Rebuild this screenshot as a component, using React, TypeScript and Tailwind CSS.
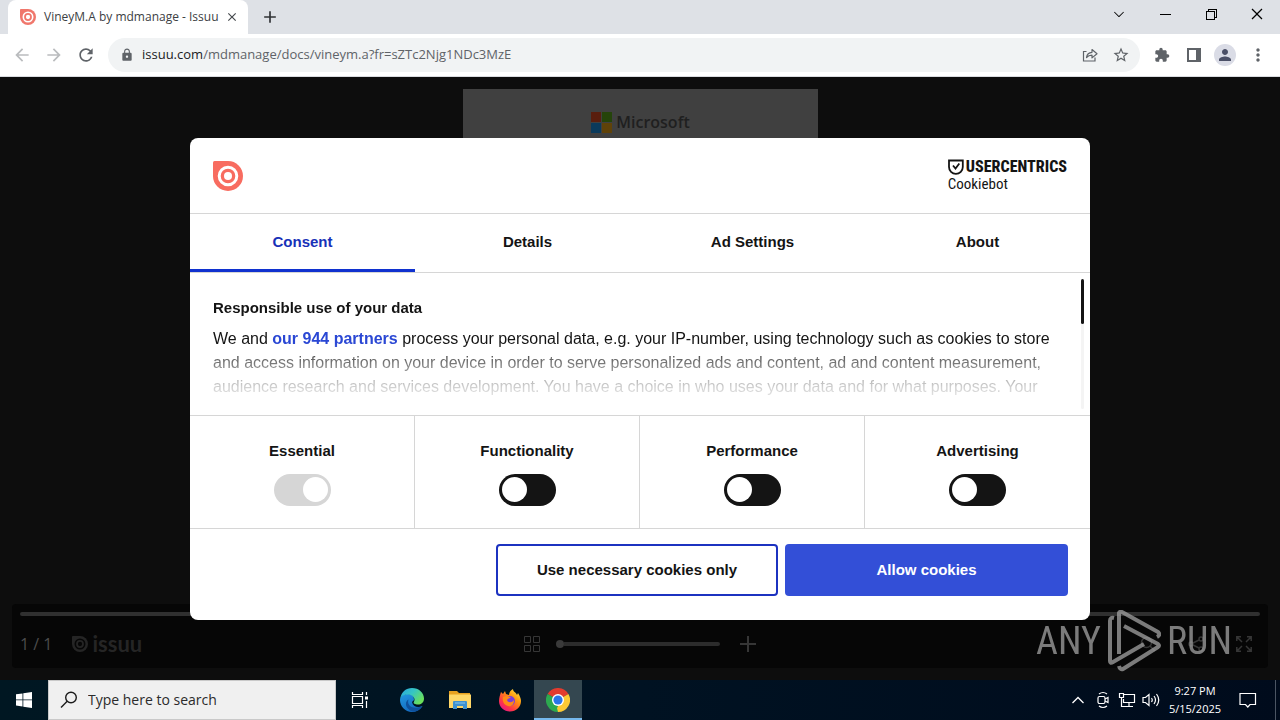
import { useState } from 'react'
import {
  MdAdd,
  MdArrowBack,
  MdArrowForward,
  MdClose,
  MdExtension,
  MdLock,
  MdMoreVert,
  MdPerson,
  MdRefresh,
  MdStarBorder
} from 'react-icons/md'
import { VscChevronDown, VscChromeClose, VscChromeMinimize, VscChromeRestore } from 'react-icons/vsc'

const tabs = ['Consent', 'Details', 'Ad Settings', 'About']

const categories = [
  { id: 'essential', label: 'Essential', locked: true },
  { id: 'functionality', label: 'Functionality', locked: false },
  { id: 'performance', label: 'Performance', locked: false },
  { id: 'advertising', label: 'Advertising', locked: false }
]

function IssuuMark({ className }: { className: string }) {
  return (
    <svg viewBox="0 0 30 30" className={className} fill="none">
      <path d="M1.500 0H15a15 15 0 1 1-15 15V1.500Q0 0 1.500 0Z" fill="currentColor" />
      <circle cx="15" cy="15" r="8.800" className="stroke-(--ring)" strokeWidth="3" />
      <circle cx="15" cy="15" r="4" className="fill-(--ring)" />
    </svg>
  )
}

function ShareIcon() {
  return (
    <svg viewBox="0 0 16 16" className="h-4 w-4" fill="none" stroke="currentColor" strokeWidth="1.200">
      <path d="M4.500 4.500H1.500V14h11.500V10.500" />
      <path d="M4.500 10.500C5 7 7 5.500 10 5.300V2.500l5 4.200-5 4.200V8.200C7.500 8.200 6 8.800 4.500 10.500Z" strokeLinejoin="round" />
    </svg>
  )
}

function TitleBar() {
  return (
    <header className="flex h-[34px] items-stretch bg-[#dee1e6] pl-2">
      <div className="flex w-60 items-center rounded-t-lg bg-white pl-3 pr-2">
        <IssuuMark className="h-4 w-4 text-[#f0776c] [--ring:#fff]" />
        <span className="ml-2 flex-1 whitespace-nowrap text-xs text-[#3c4043]">VineyM.A by mdmanage - Issuu</span>
        <button aria-label="Close tab" className="flex h-4 w-4 items-center justify-center text-[#45494d]">
          <MdClose className="h-[14px] w-[14px]" />
        </button>
      </div>
      <button aria-label="New tab" className="ml-3 text-[#303336]">
        <MdAdd className="h-5 w-5" />
      </button>
      <div className="ml-auto flex pb-[6px] text-black">
        <button aria-label="Search tabs" className="flex w-[46px] items-center justify-center">
          <VscChevronDown className="h-4 w-4" />
        </button>
        <button aria-label="Minimize" className="flex w-[46px] items-center justify-center">
          <VscChromeMinimize className="h-4 w-4" />
        </button>
        <button aria-label="Restore" className="flex w-[46px] items-center justify-center">
          <VscChromeRestore className="h-4 w-4" />
        </button>
        <button aria-label="Close" className="flex w-[46px] items-center justify-center">
          <VscChromeClose className="h-4 w-4" />
        </button>
      </div>
    </header>
  )
}

function Toolbar() {
  return (
    <nav className="flex h-[43px] items-center border-b border-[#dadce0] bg-white pl-3 pr-3 text-[#5f6368]">
      <div className="flex gap-3">
        <button aria-label="Back" className="text-[#babcbe]">
          <MdArrowBack className="h-5 w-5" />
        </button>
        <button aria-label="Forward" className="text-[#babcbe]">
          <MdArrowForward className="h-5 w-5" />
        </button>
        <button aria-label="Reload">
          <MdRefresh className="h-5 w-5" />
        </button>
      </div>
      <div className="ml-3 flex h-[34px] flex-1 items-center rounded-full bg-[#f1f3f4] pl-3 pr-[10px]">
        <MdLock className="mr-2 h-[14px] w-[14px]" />
        <label htmlFor="url" className="text-[13px] text-[#202124]">issuu.com</label>
        <input
          id="url"
          defaultValue="/mdmanage/docs/vineym.a?fr=sZTc2Njg1NDc3MzE"
          className="min-w-0 flex-1 bg-transparent text-[13px] outline-none"
        />
        <button aria-label="Share this page">
          <ShareIcon />
        </button>
        <button aria-label="Bookmark this tab" className="ml-[14px]">
          <MdStarBorder className="h-[18px] w-[18px]" />
        </button>
      </div>
      <div className="ml-[14px] flex items-center">
        <button aria-label="Extensions">
          <MdExtension className="h-4 w-4" />
        </button>
        <button aria-label="Side panel" className="ml-4">
          <svg viewBox="0 0 16 16" className="h-4 w-4" fill="currentColor">
            <path d="M1 1h14v14H1zM3 3v10h7V3z" fillRule="evenodd" />
          </svg>
        </button>
        <button
          aria-label="Profile"
          className="ml-3 flex h-[22px] w-[22px] items-center justify-center rounded-full bg-[#dadce6] text-[#4b5067]"
        >
          <MdPerson className="h-[18px] w-[18px]" />
        </button>
        <button aria-label="More" className="ml-3">
          <MdMoreVert className="h-5 w-5" />
        </button>
      </div>
    </nav>
  )
}

function Viewer() {
  return (
    <div className="flex flex-1 flex-col px-3 pb-3 pt-3">
      <div className="mx-auto flex w-[355px] flex-1 flex-col items-center bg-[#404040] pt-[21px]">
        <div className="flex items-center gap-1 text-[#1f1f1f]">
          <svg viewBox="0 0 22 22" className="h-[22px] w-[22px]">
            <path d="M1 1h10v10H1z" fill="#591e0e" />
            <path d="M12 1h10v10H12z" fill="#25440a" />
            <path d="M1 12h10v10H1z" fill="#0b3a5b" />
            <path d="M12 12h10v10H12z" fill="#5f4209" />
          </svg>
          <span className="font-['Open_Sans',sans-serif] text-base font-semibold">Microsoft</span>
        </div>
      </div>
      <div className="flex h-16 flex-col rounded bg-[#060606] px-2 pt-2">
        <div className="h-1 rounded-full bg-[#303030]" />
        <div className="grid flex-1 grid-cols-3 items-center pt-1 text-[#363636]">
          <div className="flex items-center gap-5">
            <span className="text-base text-[#4c4c4c]">1 / 1</span>
            <div className="flex items-center gap-1 text-[#252525]">
              <IssuuMark className="h-4 w-4 [--ring:#060606]" />
              <span className="font-[Lato,sans-serif] text-[22px]/5 font-bold">issuu</span>
            </div>
          </div>
          <div className="flex items-center justify-center gap-4">
            <svg viewBox="0 0 16 16" className="h-4 w-4" fill="none" stroke="currentColor">
              <path d="M.5.5h6v6h-6zM9.500.5h6v6h-6zM.5 9.500h6v6h-6zM9.500 9.500h6v6h-6z" />
            </svg>
            <div className="mr-1 flex w-[164px] items-center">
              <div className="h-2 w-2 rounded-full bg-[#3a3a3a]" />
              <div className="h-1 flex-1 rounded-r-full bg-[#2c2c2c]" />
            </div>
            <svg viewBox="0 0 16 16" className="h-4 w-4" stroke="currentColor" strokeWidth="2">
              <path d="M8 0v16M0 8h16" />
            </svg>
          </div>
          <div className="flex items-center justify-end gap-8 pr-2">
            <svg viewBox="0 0 16 16" className="h-4 w-4" fill="none" stroke="currentColor" strokeWidth="1.500">
              <circle cx="6.500" cy="6.500" r="5" />
              <path d="M10 10l5 5" />
            </svg>
            <svg viewBox="0 0 16 16" className="h-4 w-4" fill="none" stroke="currentColor" strokeWidth="1.500">
              <circle cx="3" cy="8" r="2" />
              <circle cx="13" cy="3" r="2" />
              <circle cx="13" cy="13" r="2" />
              <path d="M5 7l6-3M5 9l6 3" />
            </svg>
            <svg viewBox="0 0 16 16" className="h-4 w-4" fill="none" stroke="currentColor" strokeWidth="1.500">
              <path d="M.8 5V.8H5M1 1l5 5M11 .8h4.200V5M15 1l-5 5M.8 11v4.200H5M1 15l5-5M11 15.200h4.200V11M15 15l-5-5" />
            </svg>
          </div>
        </div>
      </div>
    </div>
  )
}

function CookieDialog() {
  const [activeTab, setActiveTab] = useState('Consent')

  return (
    <div
      role="dialog"
      aria-label="Cookie consent"
      className="w-full max-w-[900px] overflow-hidden rounded-lg bg-white font-['Liberation_Sans',Arial,sans-serif] text-[15px] text-[#141414]"
    >
      <div className="flex h-[76px] items-center justify-between border-b border-[#d6d6d6] px-[23px] pt-[2px]">
        <IssuuMark className="h-[30px] w-[30px] text-[#f86c60] [--ring:#fff]" />
        <div className="font-['Roboto_Condensed','Liberation_Sans_Narrow',sans-serif]">
          <div className="flex items-center gap-[2px]">
            <svg viewBox="0 0 16 16" className="h-4 w-4" fill="none" stroke="currentColor" strokeWidth="1.800">
              <path d="M1 1.500h13.800V8a6.900 6.900 0 0 1-13.800 0Z" />
              <path d="M5 6.500l2.500 3 3.800-5" />
            </svg>
            <span className="text-base/4 font-extrabold">USERCENTRICS</span>
          </div>
          <div className="text-[15px]/[18px]">Cookiebot</div>
        </div>
      </div>

      <div role="tablist" className="grid h-[59px] grid-cols-4 border-b border-[#d6d6d6]">
        {tabs.map((tab) => (
          <button
            key={tab}
            role="tab"
            aria-selected={tab === activeTab}
            onClick={() => setActiveTab(tab)}
            className={`border-b-[3px] pt-[2px] font-bold ${
              tab === activeTab ? 'border-[#1032cf] text-[#1831b8]' : 'border-transparent'
            }`}
          >
            {tab}
          </button>
        ))}
      </div>

      <div className="flex h-[143px] justify-between overflow-hidden border-b border-[#d6d6d6] pl-[23px] pr-[6px] pt-[6px]">
        <div className="h-[136px] overflow-hidden pt-[17px] [mask-image:linear-gradient(to_bottom,#000_64px,#0008_86px,#0003_108px,transparent_134px)]">
          <h2 className="text-[15px]/6 font-bold">Responsible use of your data</h2>
          <p className="mt-[7px] whitespace-nowrap text-base/6">
            We and{' '}
            <a href="#partners" className="font-bold text-[#2a47d4]">our 944 partners</a>
            {' '}process your personal data, e.g. your IP-number, using technology such as cookies to store
            <br />
            and access information on your device in order to serve personalized ads and content, ad and content measurement,
            <br />
            audience research and services development. You have a choice in who uses your data and for what purposes. Your
          </p>
        </div>
        <div className="h-[130px] w-[3px] rounded-full bg-[#f4f4f4]">
          <div className="h-[45px] rounded-full bg-[#141414]" />
        </div>
      </div>

      <div className="grid h-[113px] grid-cols-4 divide-x divide-[#d6d6d6] border-b border-[#d6d6d6]">
        {categories.map(({ id, label, locked }) => (
          <div key={id} className="flex flex-col items-center gap-3 pt-6">
            <label htmlFor={id} className="leading-[22px] font-bold">{label}</label>
            <input
              id={id}
              type="checkbox"
              defaultChecked={locked}
              disabled={locked}
              className="flex h-8 w-[57px] appearance-none items-center rounded-full bg-[#141414] px-[3px] before:h-[25px] before:w-[25px] before:rounded-full before:bg-white checked:justify-end checked:bg-[#1032cf] disabled:bg-[#d6d6d6]"
            />
          </div>
        ))}
      </div>

      <div className="flex h-[91px] justify-end gap-[7px] px-[22px] pt-[15px]">
        <button className="h-[52px] w-[282px] rounded border-2 border-[#1c32c0] pt-[2px] font-bold">
          Use necessary cookies only
        </button>
        <button className="h-[52px] w-[283px] rounded bg-[#334fd7] pt-[2px] font-bold text-white">Allow cookies</button>
      </div>
    </div>
  )
}

function Watermark() {
  return (
    <div className="pointer-events-none absolute bottom-2 right-12 flex items-center gap-[6px] font-['Roboto_Condensed','Liberation_Sans_Narrow',sans-serif] text-[38px] leading-[62px] text-[#999999] opacity-80">
      <span>ANY</span>
      <svg viewBox="0 0 54 62" className="h-[62px] w-[54px]" fill="none" stroke="currentColor" strokeWidth="4" strokeLinejoin="round">
        <path d="M12 44V3q1-2 3-1l36 20q3 3-1 5" />
        <path d="M17 16l34 18q2 1.500 0 3L16 59q-3 1-4-3" />
        <path d="M7 8q-4-1-4 3v40q0 3 3 1l31-18" />
      </svg>
      <span>RUN</span>
    </div>
  )
}

function EdgeIcon() {
  return (
    <svg viewBox="0 0 24 24" className="h-6 w-6">
      <defs>
        <linearGradient id="edge-top" x1="0" y1="0" x2="1" y2="0.600">
          <stop offset="0" stopColor="#2aa5e0" />
          <stop offset="0.500" stopColor="#35c5c4" />
          <stop offset="1" stopColor="#6be05a" />
        </linearGradient>
        <linearGradient id="edge-side" x1="0" y1="0" x2="0.600" y2="1">
          <stop offset="0" stopColor="#2298e0" />
          <stop offset="1" stopColor="#1267bd" />
        </linearGradient>
      </defs>
      <path d="M0 12c0-4 4-6 8-6 5 0 6 3 6 6l-2 2c1 5 6 6 10.500 4C20 22 16 24 12 24 5 24 0 18 0 12Z" fill="url(#edge-side)" />
      <path d="M8.500 11.500c-2 6 4 11 14 6.500C19 24 12 25 9 21.500c-4-3-4-8-.5-10Z" fill="#0f519c" />
      <path d="M.2 10.500C1.500 4 6 0 12 0c7 0 12 5 12 10.500 0 4-3 6-6 6-3 0-5-1-4.200-2.500C16 11 13 6.500 8 6.500c-4 0-6.500 1.500-7.800 4Z" fill="url(#edge-top)" />
    </svg>
  )
}

function ExplorerIcon() {
  return (
    <svg viewBox="0 0 24 24" className="h-6 w-6">
      <path d="M1 3h8l2 2h11v4H1z" fill="#e8a11f" />
      <path d="M1 6.500h22V20H1z" fill="#ffd767" />
      <path d="M5 21v-7q0-1 1-1h12q1 0 1 1v7h-4v-3H9v3z" fill="#3f92cf" />
      <path d="M7 14.500h10v1H7z" fill="#8ac6ea" />
    </svg>
  )
}

function FirefoxIcon() {
  return (
    <svg viewBox="0 0 24 24" className="h-6 w-6">
      <defs>
        <linearGradient id="fox" x1="1" y1="0" x2="0.200" y2="1">
          <stop offset="0" stopColor="#fff44f" />
          <stop offset="0.400" stopColor="#ff980e" />
          <stop offset="0.750" stopColor="#ff3647" />
          <stop offset="1" stopColor="#e31587" />
        </linearGradient>
      </defs>
      <path d="M3 4l2 2 2-3 1 3 3 1c0-3 2-5 4-6 0 3 3 3 4 6l1-2c2 3 3 6 3 8 0 6-5 10.500-11 10.500S1 19 1 13c0-3 1-6 2-9Z" fill="url(#fox)" />
      <circle cx="12" cy="13" r="5" fill="#7a3fd9" />
      <path d="M5 9c3-2 6-1 8 1-2 0-3 1-4 2 1 3 5 3 7 0 0 5-3 7-6 6-4-1-6-5-5-9Z" fill="#ff8a16" />
    </svg>
  )
}

function ChromeIcon() {
  return (
    <svg viewBox="0 0 24 24" className="h-6 w-6">
      <path d="M12 12L1.600 6A12 12 0 0 1 22.400 6Z" fill="#e33b2e" />
      <path d="M12 12L22.400 6A12 12 0 0 1 12 24Z" fill="#fcc934" />
      <path d="M12 12V24A12 12 0 0 1 1.600 6Z" fill="#2da94f" />
      <path d="M17 14.500L12 24l-1-4 3-5z" fill="#fcc934" />
      <circle cx="12" cy="12" r="6" fill="#fff" />
      <circle cx="12" cy="12" r="4.600" fill="#2a75e8" />
    </svg>
  )
}

function Taskbar() {
  return (
    <footer className="flex h-10 items-stretch bg-linear-to-r from-[#001722] via-[#001222] to-[#000b1c] text-white">
      <button aria-label="Start" className="flex w-12 items-center justify-center">
        <svg viewBox="0 0 16 16" className="h-4 w-4" fill="currentColor">
          <path d="M0 2.300l6.500-.9v6.100H0zM7.300 1.300L16 0v7.500H7.300zM0 8.300h6.500v6.200L0 13.600zM7.300 8.300H16V16l-8.700-1.300z" />
        </svg>
      </button>
      <div className="flex w-72 items-center gap-[10px] border border-[#c9c9c9] bg-[#f0f0f0] pl-[11px]">
        <svg viewBox="0 0 18 18" className="h-[18px] w-[18px]" fill="none" stroke="#1b1b1b" strokeWidth="1.400">
          <circle cx="11" cy="6.500" r="5.300" />
          <path d="M7.200 10.300L1 16.500" />
        </svg>
        <input
          aria-label="Search"
          placeholder="Type here to search"
          className="min-w-0 flex-1 bg-transparent text-sm outline-none placeholder:text-[#2b2b2b]"
        />
      </div>
      <button aria-label="Task View" className="flex w-12 items-center justify-center">
        <svg viewBox="0 0 18 16" className="h-4 w-[18px]" fill="none" stroke="currentColor" strokeWidth="1.200">
          <path d="M1.500 4.500h10v7h-10zM1.500 0v2.500h10V0M1.500 16v-2.500h10V16M15.500 0v3M15.500 9v7" />
          <path d="M14 4.500h3v3h-3z" fill="currentColor" stroke="none" />
        </svg>
      </button>
      <div className="flex pl-[6px]">
        <button aria-label="Microsoft Edge" className="flex w-11 items-center justify-center">
          <EdgeIcon />
        </button>
        <button aria-label="File Explorer" className="flex w-[52px] items-center justify-center">
          <ExplorerIcon />
        </button>
        <button aria-label="Firefox" className="flex w-12 items-center justify-center">
          <FirefoxIcon />
        </button>
        <button aria-label="Chrome" className="flex w-12 items-center justify-center border-b-2 border-[#76b9ed] bg-[#344750] pt-[2px]">
          <ChromeIcon />
        </button>
      </div>
      <div className="ml-auto flex items-center">
        <button aria-label="Show hidden icons" className="mr-3">
          <svg viewBox="0 0 12 12" className="h-3 w-3" fill="none" stroke="currentColor" strokeWidth="1.300">
            <path d="M.5 9L6 3.500 11.500 9" />
          </svg>
        </button>
        <svg viewBox="0 0 14 18" className="mr-2 h-[18px] w-[14px]" fill="none" stroke="currentColor" strokeWidth="1.200">
          <path d="M3 3q4-3 8 0M3 15q4 3 8 0" />
          <rect x="2" y="5.500" width="7" height="7" rx="1.500" />
          <path d="M9 8l3-1.500v5L9 10" />
        </svg>
        <svg viewBox="0 0 18 16" className="mr-[6px] h-4 w-[18px]" fill="none" stroke="currentColor" strokeWidth="1.200">
          <path d="M6 2.500h10.500v8H5.500V7M11 10.500V14M7 14.500h8" />
          <path d="M1.500 1.500h4v4h-4zM3.500 5.500V14.500H7" />
        </svg>
        <svg viewBox="0 0 18 16" className="h-4 w-[18px]" fill="none" stroke="currentColor" strokeWidth="1.200">
          <path d="M1 5.500h2.500L7 2.500v11l-3.500-3H1z" />
          <path d="M9.500 6q1.500 2 0 4M12 4q3 4 0 8M14.500 2q4.500 6 0 12" />
        </svg>
        <div className="w-[70px] text-center text-[11px]/[18px]">
          <div>9:27 PM</div>
          <div>5/15/2025</div>
        </div>
        <button aria-label="Notifications" className="mr-[18px] ml-[9px]">
          <svg viewBox="0 0 18 18" className="h-[18px] w-[18px]" fill="none" stroke="currentColor" strokeWidth="1.200">
            <path d="M1 2.500h15.500v11H11L8.800 16l-2.300-2.500H1z" />
          </svg>
        </button>
        <div className="mr-1 h-full w-px bg-[#4b5563]" />
      </div>
    </footer>
  )
}

export default function App() {
  return (
    <div className="flex min-h-screen flex-col font-['Open_Sans','Noto_Sans',sans-serif]">
      <TitleBar />
      <Toolbar />
      <main className="relative flex flex-1 flex-col bg-[#0d0d0d]">
        <Viewer />
        <div className="absolute inset-0 flex items-center justify-center">
          <CookieDialog />
        </div>
        <Watermark />
      </main>
      <Taskbar />
    </div>
  )
}
